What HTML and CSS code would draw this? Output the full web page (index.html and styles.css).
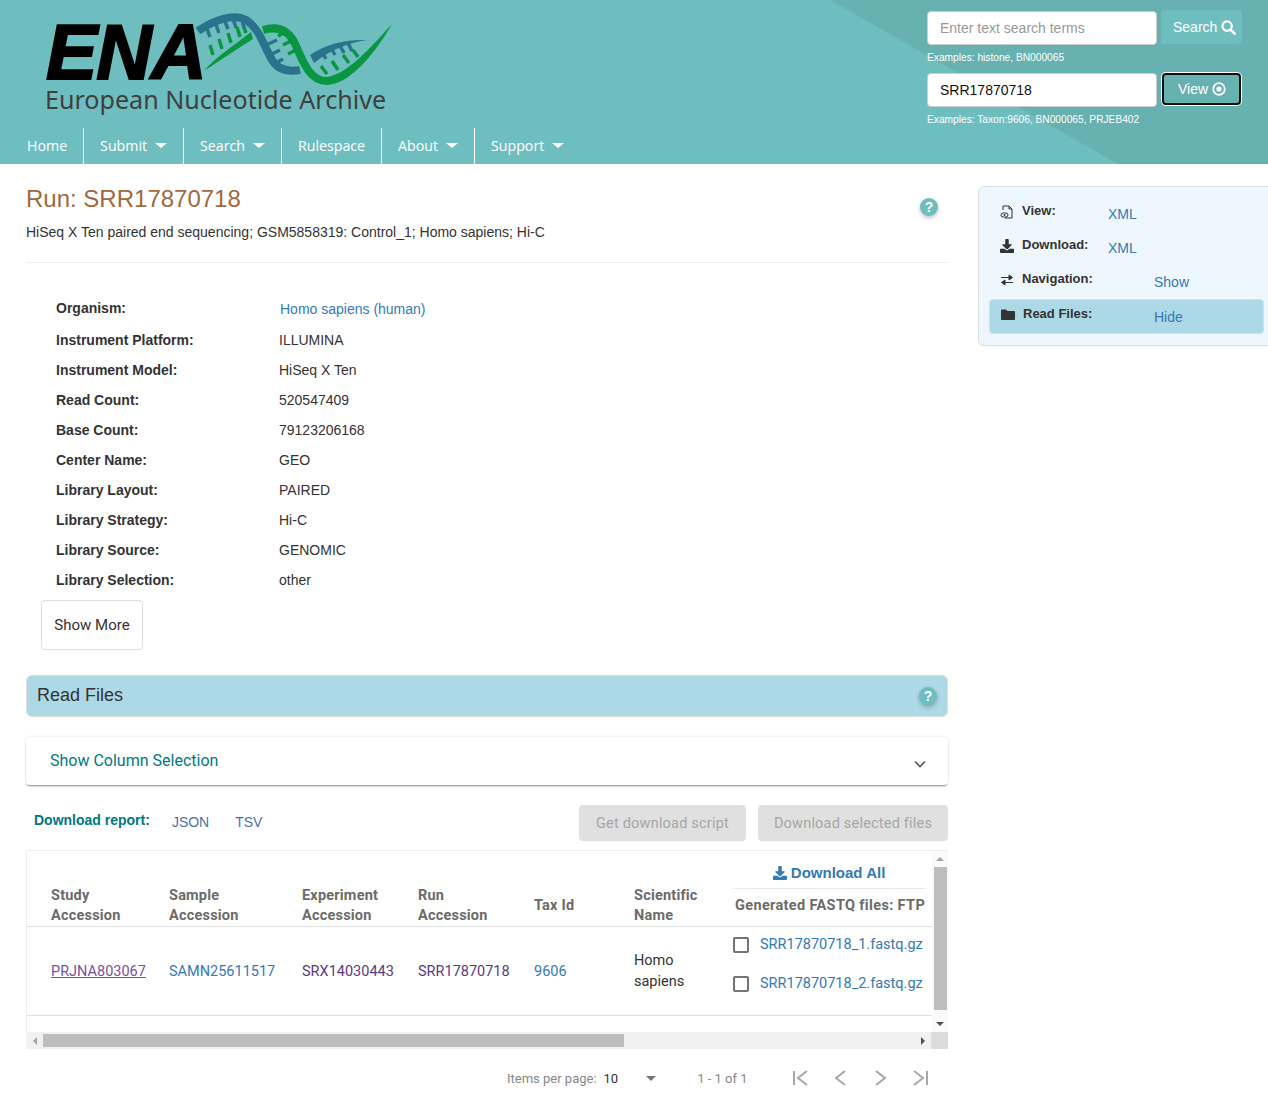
FILE: index.html
```html
<!DOCTYPE html>
<html lang="en">
<head>
    <meta charset="UTF-8">
    <meta name="viewport" content="width=device-width, initial-scale=1.0">
    <title>ENA Browser</title>
    <link rel="stylesheet" href="styles.css">
</head>
<body>
    <svg class="icon-defs" width="0" height="0">
        <symbol id="i-download" viewBox="0 0 512 512"><path d="M216 0h80c13 0 24 11 24 24v168h88c18 0 27 21 14 34L270 378c-8 8-20 8-28 0L90 226c-13-13-4-34 14-34h88V24c0-13 11-24 24-24zM512 376v112c0 13-11 24-24 24H24c-13 0-24-11-24-24V376c0-13 11-24 24-24h147l49 49c20 20 52 20 72 0l49-49h147c13 0 24 11 24 24z"/></symbol>
    </svg>

    <header class="site-header">
        <div class="header-left">
            <svg class="logo" width="400" height="128" viewBox="0 0 400 128">
                <text class="logo-ena" x="46" y="79">ENA</text>
                <text class="logo-name" x="45" y="108.5">European Nucleotide Archive</text>
                <g transform="translate(180 0)">
                    <g class="rungs-blue">
                        <path d="M26 26l4 11M35 22l4 11M44 19l4 10M53 18l3 10M62 19l2 9"/>
                        <path d="M84 46l13-6M88 56l12-6M92 65l11-6"/>
                        <path d="M141 50l5 9M150 46l5 9M159 44l5 9M168 43l4 8"/>
                    </g>
                    <g class="rungs-green">
                        <path d="M33 55l-3-10M42 49l-3-10M51 43l-3-10M60 37l-3-10M66 33l-2-6"/>
                        <path d="M98 36l9-5M103 45l10-5M108 54l10-5"/>
                        <path d="M147 74l-6-8M158 70l-6-9M169 63l-6-8M178 57l-5-7"/>
                    </g>
                    <path class="strand-blue" d="M18 31C34 20 54 13 66 20 79 28 84 46 92 60 98 70 108 72 120 70"/>
                    <path class="strand-fill-green" d="M24 71C38 55 52 47 71 32L73 39C56 50 40 60 24 71Z"/>
                    <path class="strand-fill-blue" d="M130 55C146 44 165 39 187 40 168 43 150 50 134 63Z"/>
                    <path class="strand-green" d="M83 30C100 25 110 32 116 46 124 64 130 80 146 81"/>
                    <path class="strand-fill-green" d="M146 77C166 76 192 46 212 24 196 52 170 85 146 85Z"/>
                </g>
            </svg>
            <nav class="main-nav">
                <a href="#">Home</a>
                <a href="#" class="has-caret">Submit</a>
                <a href="#" class="has-caret">Search</a>
                <a href="#">Rulespace</a>
                <a href="#" class="has-caret">About</a>
                <a href="#" class="has-caret">Support</a>
            </nav>
        </div>
        <div class="header-search">
            <div class="search-row">
                <input type="text" placeholder="Enter text search terms">
                <button class="search-btn">Search
                    <svg width="15" height="15" viewBox="0 0 16 16"><circle cx="6.5" cy="6.5" r="5" fill="none" stroke="#fff" stroke-width="2.4"/><path d="M10.2 10.2l4.3 4.3" stroke="#fff" stroke-width="2.8" stroke-linecap="round"/></svg>
                </button>
            </div>
            <p class="examples">Examples: histone, BN000065</p>
            <div class="search-row view-row">
                <input type="text" value="SRR17870718">
                <button class="search-btn view-btn">View
                    <svg width="14" height="14" viewBox="0 0 16 16"><circle cx="8" cy="8" r="6.6" fill="none" stroke="#fff" stroke-width="2"/><circle cx="8" cy="8" r="3" fill="#fff"/></svg>
                </button>
            </div>
            <p class="examples">Examples: Taxon:9606, BN000065, PRJEB402</p>
        </div>
    </header>

    <div class="page">
        <main class="content">
            <div class="title-row">
                <h1>Run: SRR17870718</h1>
                <span class="help">?</span>
            </div>
            <p class="description">HiSeq X Ten paired end sequencing; GSM5858319: Control_1; Homo sapiens; Hi-C</p>

            <dl class="details">
                <dt class="organism">Organism:</dt><dd class="organism"><a href="#">Homo sapiens (human)</a></dd>
                <dt>Instrument Platform:</dt><dd>ILLUMINA</dd>
                <dt>Instrument Model:</dt><dd>HiSeq X Ten</dd>
                <dt>Read Count:</dt><dd>520547409</dd>
                <dt>Base Count:</dt><dd>79123206168</dd>
                <dt>Center Name:</dt><dd>GEO</dd>
                <dt>Library Layout:</dt><dd>PAIRED</dd>
                <dt>Library Strategy:</dt><dd>Hi-C</dd>
                <dt>Library Source:</dt><dd>GENOMIC</dd>
                <dt>Library Selection:</dt><dd>other</dd>
            </dl>
            <button class="show-more">Show More</button>

            <div class="section-bar">
                <h2>Read Files</h2>
                <span class="help">?</span>
            </div>

            <div class="expansion">
                <span>Show Column Selection</span>
                <svg width="12" height="8" viewBox="0 0 12 8"><path d="M1 1.5l5 5 5-5" fill="none" stroke="#555" stroke-width="1.6"/></svg>
            </div>

            <div class="report-row">
                <strong>Download report:</strong>
                <a href="#" class="visited">JSON</a>
                <a href="#" class="visited">TSV</a>
                <div class="report-actions">
                    <button class="script-btn" disabled>Get download script</button>
                    <button class="files-btn" disabled>Download selected files</button>
                </div>
            </div>

            <div class="table-box">
                <div class="table-scroll">
                    <div class="table-view">
                        <table>
                            <thead>
                                <tr>
                                    <th class="col-study">Study<br>Accession</th>
                                    <th class="col-sample">Sample<br>Accession</th>
                                    <th class="col-exp">Experiment<br>Accession</th>
                                    <th class="col-run">Run<br>Accession</th>
                                    <th class="col-tax">Tax Id</th>
                                    <th class="col-name">Scientific<br>Name</th>
                                    <th class="col-files">
                                        <div class="download-all">
                                            <a href="#"><svg width="14" height="14"><use href="#i-download"/></svg> Download All</a>
                                        </div>
                                        <div class="generated">Generated FASTQ files: FTP</div>
                                    </th>
                                </tr>
                            </thead>
                            <tbody>
                                <tr>
                                    <td><a href="#" class="study-link">PRJNA803067</a></td>
                                    <td><a href="#">SAMN25611517</a></td>
                                    <td><a href="#" class="visited-dark">SRX14030443</a></td>
                                    <td><a href="#" class="visited-dark">SRR17870718</a></td>
                                    <td><a href="#">9606</a></td>
                                    <td>Homo<br>sapiens</td>
                                    <td class="files-cell">
                                        <label class="file-row"><span class="checkbox"></span><a href="#">SRR17870718_1.fastq.gz</a></label>
                                        <label class="file-row"><span class="checkbox"></span><a href="#">SRR17870718_2.fastq.gz</a></label>
                                    </td>
                                </tr>
                            </tbody>
                        </table>
                    </div>
                    <div class="scroll-y">
                        <span class="arrow-up"></span>
                        <div class="thumb-y"></div>
                        <span class="arrow-down"></span>
                    </div>
                </div>
                <div class="scroll-x">
                    <span class="arrow-left"></span>
                    <div class="thumb-x"></div>
                    <span class="arrow-right"></span>
                    <div class="scroll-corner"></div>
                </div>
            </div>

            <div class="paginator">
                <span class="per-page">Items per page:</span>
                <span class="page-size">10</span>
                <span class="select-caret"></span>
                <span class="range">1 - 1 of 1</span>
                <svg class="pager-icons" width="148" height="16" viewBox="0 0 148 16">
                    <path d="M4 1v14M17 1l-9 7 9 7"/>
                    <path d="M55 1l-9 7 9 7"/>
                    <path d="M86 1l9 7-9 7"/>
                    <path d="M124 1l9 7-9 7M137 1v14"/>
                </svg>
            </div>
        </main>

        <aside class="side-panel">
            <div class="side-row">
                <svg class="side-icon" width="14" height="14" viewBox="0 0 14 14"><path d="M3 5V1h6l3 3v9H5M9 1v3h3" fill="none" stroke="#333" stroke-width="1"/><ellipse cx="4.5" cy="10" rx="3.6" ry="2.2" fill="none" stroke="#333" stroke-width="1"/><circle cx="4.5" cy="10" r="1" fill="#333"/></svg>
                <span class="side-label">View:</span>
                <a href="#" class="side-link">XML</a>
            </div>
            <div class="side-row">
                <svg class="side-icon" width="14" height="14"><use href="#i-download"/></svg>
                <span class="side-label">Download:</span>
                <a href="#" class="side-link">XML</a>
            </div>
            <div class="side-row">
                <svg class="side-icon" width="14" height="14" viewBox="0 0 14 14"><path d="M1 4.5h10M9 2l3.5 2.5L9 7zM13 9.5H3M5 7l-3.5 2.5L5 12z" fill="#333" stroke="#333" stroke-width="1" stroke-linejoin="round"/></svg>
                <span class="side-label">Navigation:</span>
                <a href="#" class="side-link wide">Show</a>
            </div>
            <div class="side-row active">
                <svg class="side-icon" width="14" height="14" viewBox="0 0 14 14"><path d="M0 2.5C0 2 .5 1.5 1 1.5h4l1.5 1.5H13c.5 0 1 .5 1 1v7c0 .5-.5 1-1 1H1c-.5 0-1-.5-1-1z" fill="#333"/></svg>
                <span class="side-label">Read Files:</span>
                <a href="#" class="side-link wide">Hide</a>
            </div>
        </aside>
    </div>
</body>
</html>
```

FILE: styles.css
```css
body {
    margin: 0;
    font-family: "Liberation Sans", Arial, sans-serif;
    font-size: 14px;
    color: #333;
    background-color: #fff;
    overflow: hidden;
}
a {
    color: #337ab7;
    text-decoration: none;
}
.icon-defs {
    display: block;
}

/* header */
.site-header {
    display: flex;
    justify-content: space-between;
    height: 164px;
    background-color: #6ebebf;
    position: relative;
    overflow: hidden;
}
.site-header::before {
    content: "";
    position: absolute;
    top: 0;
    right: 0;
    width: 438px;
    height: 164px;
    background-color: #68b1b1;
    clip-path: polygon(0 0, 100% 0, 100% 100%, 288px 100%);
}
.header-left {
    position: relative;
    display: flex;
    flex-direction: column;
}
.logo {
    display: block;
}
.logo-ena {
    font-family: "Liberation Sans", Arial, sans-serif;
    font-size: 77px;
    font-weight: bold;
    font-style: italic;
    letter-spacing: -1px;
    fill: #000;
    stroke: #000;
    stroke-width: 2px;
}
.logo-name {
    font-family: "Noto Sans", sans-serif;
    font-size: 25.1px;
    fill: #3f3f40;
}
.rungs-blue path, .rungs-green path {
    fill: none;
    stroke-width: 3.5px;
}
.rungs-blue path {
    stroke: #29748c;
}
.rungs-green path {
    stroke: #0a9640;
}
.strand-blue {
    fill: none;
    stroke: #29748c;
    stroke-width: 8px;
}
.strand-green {
    fill: none;
    stroke: #0a9640;
    stroke-width: 8px;
}
.strand-fill-blue {
    fill: #29748c;
}
.strand-fill-green {
    fill: #0a9640;
}
.main-nav {
    display: flex;
    height: 36px;
}
.main-nav a {
    display: flex;
    align-items: center;
    padding: 0 16px 2px 16px;
    color: #fff;
    font-family: "Open Sans", sans-serif;
    font-size: 14.2px;
    border-left: 1px solid #fff;
}
.main-nav a:first-child {
    border-left: none;
    padding-left: 27px;
}
.has-caret::after {
    content: "";
    margin-left: 8px;
    border-top: 5px solid #fff;
    border-left: 6px solid transparent;
    border-right: 6px solid transparent;
}
.header-search {
    position: relative;
    width: 341px;
    padding-top: 10px;
}
.search-row {
    display: flex;
    align-items: flex-start;
    height: 35px;
}
.search-row input {
    box-sizing: border-box;
    width: 230px;
    height: 34px;
    margin-top: 1px;
    margin-right: 4px;
    padding: 0 12px;
    border: 1px solid #ccc;
    border-radius: 4px;
    font-family: "Liberation Sans", Arial, sans-serif;
    font-size: 14px;
    color: #111;
    background-color: #fff;
}
.view-row input {
    margin-top: 0;
}
.view-row {
    height: 34px;
}
.search-row input::placeholder {
    color: #999;
}
.search-btn {
    box-sizing: border-box;
    display: flex;
    align-items: center;
    gap: 4px;
    width: 81px;
    height: 34px;
    padding: 0 0 0 12px;
    border: none;
    border-radius: 4px;
    background-color: #6ebebf;
    color: #fff;
    font-family: "Liberation Sans", Arial, sans-serif;
    font-size: 14px;
}
.view-btn {
    width: 79px;
    height: 32px;
    margin-left: 1px;
    padding-left: 14px;
    border: 2px solid #111;
    background-color: #68b1b1;
    box-shadow: 0 0 0 1px #fff;
}
.examples {
    margin: 7px 0 0;
    height: 21px;
    font-size: 10.2px;
    line-height: 12px;
    color: #fff;
}

/* page */
.page {
    display: flex;
    align-items: flex-start;
}
.content {
    box-sizing: border-box;
    width: 922px;
    margin-left: 26px;
    flex-shrink: 0;
}
.title-row {
    display: flex;
    justify-content: space-between;
    align-items: flex-start;
    padding: 20px 10px 0 0;
}
.title-row .help {
    margin-top: 14px;
}
h1 {
    margin: 0;
    font-size: 24px;
    font-weight: normal;
    line-height: 30px;
    color: #a0693d;
}
.help {
    display: flex;
    justify-content: center;
    align-items: center;
    width: 18px;
    height: 18px;
    border-radius: 50%;
    background-color: #6ebebf;
    color: #fff;
    font-size: 14px;
    font-weight: bold;
    box-shadow: 0 2px 4px rgba(0, 0, 0, 0.25);
}
.description {
    margin: 6px 0 0;
    padding-bottom: 20px;
    line-height: 20px;
    border-bottom: 1px solid #eee;
}
.details {
    display: grid;
    grid-template-columns: 223px 1fr;
    grid-auto-rows: 30px;
    margin: 32px 0 0;
    padding-left: 30px;
    line-height: 30px;
}
.details dt {
    font-weight: bold;
    color: #333;
}
.details dd {
    margin: 0;
}
.details .organism {
    line-height: 26px;
}
.details dd.organism {
    padding-left: 1px;
    padding-top: 1px;
}
.show-more {
    display: block;
    margin: 5px 0 0 15px;
    width: 102px;
    height: 50px;
    background-color: #fff;
    border: 1px solid #ddd;
    border-radius: 4px;
    font-family: "Roboto", sans-serif;
    font-size: 15px;
    color: #333;
}
.section-bar {
    box-sizing: border-box;
    display: flex;
    justify-content: space-between;
    align-items: center;
    height: 42px;
    margin-top: 25px;
    padding: 0 10px;
    background-color: #add8e6;
    border: 1px solid #ddd;
    border-radius: 6px;
}
h2 {
    margin: 0 0 2px;
    font-size: 18px;
    font-weight: normal;
    color: #333;
}
.expansion {
    box-sizing: border-box;
    display: flex;
    justify-content: space-between;
    align-items: center;
    height: 48px;
    margin-top: 20px;
    padding: 0 22px 2px 24px;
    background-color: #fff;
    border-radius: 4px;
    box-shadow: 0 2px 2px -1px rgba(0, 0, 0, 0.45), 0 0 3px rgba(0, 0, 0, 0.12);
    font-family: "Roboto", sans-serif;
    font-size: 16px;
    color: #00797f;
}
.expansion svg {
    margin-top: 8px;
}
.report-row {
    display: flex;
    align-items: center;
    height: 36px;
    margin-top: 20px;
}
.report-row strong {
    margin: 0 22px 6px 8px;
    color: #00797f;
}
.report-row a {
    margin: 0 26px 2px 0;
}
.report-row .visited {
    color: #4b6fb0;
}
.report-actions {
    display: flex;
    gap: 12px;
    margin-left: auto;
}
.report-actions button {
    height: 36px;
    padding: 0;
    border: none;
    border-radius: 4px;
    background-color: #e0e0e0;
    color: #a6a6a6;
    font-family: "Roboto", sans-serif;
    font-size: 14.5px;
    letter-spacing: 0.2px;
}
.script-btn {
    width: 167px;
}
.files-btn {
    width: 190px;
}

/* table */
.table-box {
    margin-top: 9px;
    border-top: 1px solid #eee;
}
.table-scroll {
    display: flex;
    height: 181px;
}
.table-view {
    flex: 1;
    overflow: hidden;
    border-left: 1px solid #eee;
}
table {
    width: 905px;
    border-collapse: collapse;
    table-layout: fixed;
    font-family: "Roboto", sans-serif;
    font-size: 14.5px;
}
th {
    padding: 0;
    text-align: left;
    vertical-align: bottom;
    font-weight: 700;
    letter-spacing: 0.2px;
    line-height: 20px;
    color: #6b6b6b;
    border-bottom: 1px solid #e0e0e0;
}
td {
    padding: 0;
    height: 88px;
    color: #333;
    line-height: 21px;
    border-bottom: 1px solid #e0e0e0;
}
.col-study { width: 142px; padding-left: 24px; box-sizing: border-box; }
.col-sample { width: 133px; }
.col-exp { width: 116px; }
.col-run { width: 116px; }
.col-tax { width: 100px; padding-bottom: 10px; }
.col-name { width: 99px; }
.col-files { width: 199px; padding: 12px 0 10px; }
td:first-child {
    padding-left: 24px;
}
.study-link {
    color: #7b4fa0;
    text-decoration: underline;
}
.visited-dark {
    color: #5a3a80;
}
.download-all {
    width: 192px;
    padding-bottom: 5px;
    margin-bottom: 7px;
    text-align: center;
    border-bottom: 1px solid #e8e8e8;
    font-family: "Liberation Sans", Arial, sans-serif;
    font-size: 15px;
    font-weight: bold;
    letter-spacing: 0;
}
.download-all svg {
    fill: #337ab7;
    vertical-align: -2px;
}
.generated {
    padding-left: 2px;
    letter-spacing: 0.35px;
}
td.files-cell {
    vertical-align: top;
    height: 81px;
    padding-top: 7px;
}
.file-row {
    display: flex;
    align-items: center;
    height: 21px;
    margin-bottom: 18px;
    white-space: nowrap;
}
.checkbox {
    box-sizing: border-box;
    width: 16px;
    height: 16px;
    margin-right: 11px;
    border: 2px solid #757575;
    border-radius: 2px;
}
.scroll-y {
    display: flex;
    flex-direction: column;
    align-items: center;
    width: 16px;
    background-color: #fafafa;
}
.thumb-y {
    width: 13px;
    height: 143px;
    background-color: #bdbdbd;
}
.arrow-up, .arrow-down {
    height: 16px;
    display: flex;
    justify-content: center;
    align-items: center;
}
.arrow-down {
    margin-top: auto;
}
.arrow-up::after {
    content: "";
    border-bottom: 4px solid #a3a3a3;
    border-left: 4px solid transparent;
    border-right: 4px solid transparent;
}
.arrow-down::after {
    content: "";
    border-top: 4px solid #505050;
    border-left: 4px solid transparent;
    border-right: 4px solid transparent;
}
.scroll-x {
    display: flex;
    align-items: center;
    height: 17px;
    background-color: #f1f1f1;
}
.arrow-left, .arrow-right {
    display: flex;
    justify-content: center;
    align-items: center;
    width: 17px;
    height: 17px;
}
.arrow-left::after {
    content: "";
    border-right: 4px solid #a3a3a3;
    border-top: 4px solid transparent;
    border-bottom: 4px solid transparent;
}
.arrow-right {
    margin-left: auto;
}
.arrow-right::after {
    content: "";
    border-left: 4px solid #505050;
    border-top: 4px solid transparent;
    border-bottom: 4px solid transparent;
}
.thumb-x {
    width: 581px;
    height: 13px;
    background-color: #bdbdbd;
}
.scroll-corner {
    width: 17px;
    height: 17px;
    background-color: #dcdcdc;
}
.paginator {
    display: flex;
    align-items: center;
    height: 58px;
    padding-left: 481px;
    font-family: "Roboto", sans-serif;
    font-size: 13px;
    color: #888;
}
.page-size {
    margin-left: 7px;
    color: #333;
}
.select-caret {
    margin-left: 28px;
    border-top: 5px solid #757575;
    border-left: 5px solid transparent;
    border-right: 5px solid transparent;
}
.range {
    margin-left: 41px;
}
.pager-icons {
    margin-left: 42px;
    flex-shrink: 0;
}
.pager-icons path {
    fill: none;
    stroke: #a8a8a8;
    stroke-width: 2px;
}

/* side panel */
.side-panel {
    box-sizing: border-box;
    width: 300px;
    flex-shrink: 0;
    margin: 22px 0 0 30px;
    padding: 7px 5px 11px 10px;
    background-color: #eff7fe;
    border: 1px solid #ddd;
    border-radius: 6px;
}
.side-row {
    display: flex;
    align-items: flex-start;
    height: 34px;
    padding-top: 9px;
    box-sizing: border-box;
}
.side-icon {
    flex-shrink: 0;
    margin: 2px 0 0 11px;
    fill: #333;
}
.side-label {
    width: 86px;
    margin-left: 8px;
    font-size: 13px;
    font-weight: bold;
}
.side-link {
    padding-top: 3px;
}
.side-link.wide {
    margin-left: 46px;
}
.side-row.active {
    width: 275px;
    height: 35px;
    margin-top: 3px;
    padding-top: 6px;
    background-color: #add8e6;
    border: 1px solid #ddd;
    border-radius: 4px;
}
.side-row.active .side-link.wide {
    margin-left: 45px;
}
```
